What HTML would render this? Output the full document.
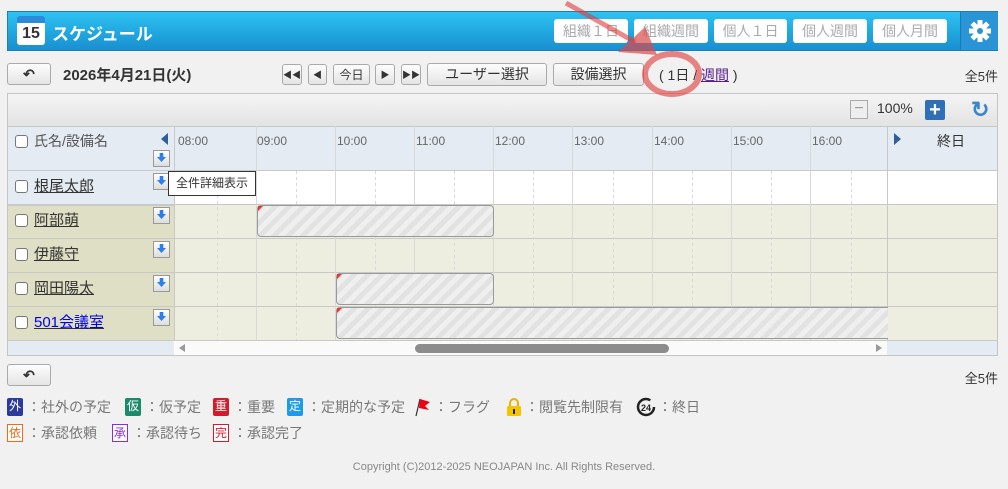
<!DOCTYPE html>
<html><head><meta charset="utf-8"><style>
*{box-sizing:border-box;margin:0;padding:0}
body{width:1008px;height:489px;background:#f1f1f1;font-family:"Liberation Sans","Noto Sans CJK JP",sans-serif;position:relative;overflow:hidden;color:#333}
.a{position:absolute}
.hdr{left:7px;top:11px;width:991px;height:40px;border:1px solid #1d7fb8;background:linear-gradient(#2fc2f2,#1fa4dd 60%,#1b8fd0);}
.hb{top:7px;height:24px;background:#fff;border-radius:3px;color:#aaa;font-size:14px;text-align:center;line-height:24px;width:74px}
.btn{background:linear-gradient(#fdfdfd,#e4e4e4);border:1px solid #aaa;border-radius:3px;text-align:center;font-size:14px;line-height:20px;color:#333}
.row{position:absolute;left:8px;width:989px;height:34px;border-top:1px solid #c8c8c8}
.cb{display:inline-block;width:13px;height:13px;border:1px solid #777;border-radius:3px;background:#fff;vertical-align:-2px;margin-right:6px}
.nm{position:absolute;left:8px;top:7px;font-size:15px;color:#333;text-decoration:underline}
.dl{position:absolute;width:17px;height:17px;border:1px solid #999;background:linear-gradient(#fff,#ddd)}
.dl:after{content:"";position:absolute;left:3px;top:2px;width:9px;height:9px;background:#2a7ff0;clip-path:polygon(30% 0,70% 0,70% 45%,100% 45%,50% 100%,0 45%,30% 45%)}
.ev{position:absolute;border:1px solid #999;border-radius:4px;background:repeating-linear-gradient(135deg,#e2e2e2 0 5px,#efefef 5px 10px)}
.ev:before{content:"";position:absolute;left:0;top:0;width:5px;height:5px;background:#e33;clip-path:polygon(0 0,100% 0,0 100%)}
.lg{font-size:14px;color:#777;position:absolute;white-space:nowrap;display:flex;align-items:center;height:20px}
.lg svg{margin-right:2px}
.ic{display:inline-block;width:16px;height:18px;font-size:12px;line-height:17px;text-align:center;color:#fff;margin-right:4px;border-radius:2px}
</style></head><body>
<div class="a hdr">
 <div class="a" style="left:9px;top:4px;width:28px;height:29px;background:#fff;border-radius:3px;border-top:7px solid #2b8bd8;font-size:16px;font-weight:bold;color:#333;text-align:center;line-height:22px">15</div>
 <div class="a" style="left:44px;top:8px;color:#fff;font-size:17px;font-weight:bold">スケジュール</div>
 <div class="a hb" style="left:546px">組織１日</div>
 <div class="a hb" style="left:626px">組織週間</div>
 <div class="a hb" style="left:706px;width:73px">個人１日</div>
 <div class="a hb" style="left:785px">個人週間</div>
 <div class="a hb" style="left:865px">個人月間</div>
 <div class="a" style="left:952px;top:0;width:38px;height:38px;border-left:1px solid #1b7ab6;background:#2a95d6">
  <svg width="38" height="38" viewBox="0 0 38 38"><g fill="#fff" transform="translate(19 19)"><circle r="7"/><g id="t"><rect x="-2.5" y="-11" width="5" height="6"/></g><use href="#t" transform="rotate(45)"/><use href="#t" transform="rotate(90)"/><use href="#t" transform="rotate(135)"/><use href="#t" transform="rotate(180)"/><use href="#t" transform="rotate(225)"/><use href="#t" transform="rotate(270)"/><use href="#t" transform="rotate(315)"/></g><circle cx="19" cy="19" r="3" fill="#2a95d6"/></svg>
 </div>
</div>
<div class="a btn" style="left:7px;top:63px;width:44px;height:22px;font-weight:bold">↶</div>
<div class="a" style="left:63px;top:64px;font-size:15px;font-weight:bold;color:#333">2026年4月21日(火)</div>
<div class="a btn" style="left:282px;top:64px;width:20px;height:21px;font-size:9px">◀◀</div>
<div class="a btn" style="left:308px;top:64px;width:19px;height:21px;font-size:9px">◀</div>
<div class="a btn" style="left:333px;top:64px;width:37px;height:21px;font-size:12px">今日</div>
<div class="a btn" style="left:375px;top:64px;width:20px;height:21px;font-size:9px">▶</div>
<div class="a btn" style="left:401px;top:64px;width:20px;height:21px;font-size:9px">▶▶</div>
<div class="a btn" style="left:427px;top:63px;width:120px;height:23px">ユーザー選択</div>
<div class="a btn" style="left:553px;top:63px;width:91px;height:23px">設備選択</div>
<div class="a" style="left:659px;top:65px;font-size:14px">( 1日 / <span style="color:#551a8b;text-decoration:underline">週間</span> )</div>
<div class="a" style="right:10px;top:66px;font-size:13px">全5件</div>

<div class="a" style="left:7px;top:93px;width:991px;height:263px;border:1px solid #c4c4c4;background:#fff"></div>
<div class="a" style="left:8px;top:94px;width:989px;height:32px;background:linear-gradient(#f4f4f4,#e3e3e3)"></div>
<div class="a" style="left:850px;top:100px;width:18px;height:19px;border:1px solid #aaa;background:#eee;color:#999;text-align:center;line-height:16px;font-size:16px">−</div>
<div class="a" style="left:877px;top:100px;font-size:14px">100%</div>
<div class="a" style="left:925px;top:100px;width:20px;height:20px;background:#2f6fb5;color:#fff;text-align:center;line-height:20px;font-size:20px;font-weight:bold;border-radius:2px">+</div>
<div class="a" style="left:971px;top:97px;font-size:22px;color:#3a86c8;font-weight:bold">↻</div>

<div class="a" style="left:8px;top:126px;width:989px;height:44px;background:#e4ebf2;border-top:1px solid #c8c8c8"></div>
<div class="a" style="left:15px;top:131px;font-size:14px;color:#555"><span class="cb"></span>氏名/設備名</div>
<div class="a" style="left:161px;top:133px;width:0;height:0;border:6px solid transparent;border-right:7px solid #2f5f96;border-left:0"></div>
<div class="dl" style="left:153px;top:150px"></div>
<div class="a" style="left:894px;top:133px;width:0;height:0;border:6px solid transparent;border-left:7px solid #2f5f96;border-right:0"></div>
<div class="a" style="left:937px;top:131px;font-size:14px">終日</div>

<div class="row" style="top:170px;background:#fff"></div>
<div class="row" style="top:204px;background:#edede0"></div>
<div class="row" style="top:238px;background:#edede0"></div>
<div class="row" style="top:272px;background:#edede0"></div>
<div class="row" style="top:306px;background:#edede0;height:35px;border-bottom:1px solid #c8c8c8"></div>
<div class="a" style="left:8px;top:171px;width:166px;height:33px;background:#e4ebf2"></div>
<div class="a" style="left:8px;top:205px;width:166px;height:135px;background:#dfdfc5"></div>
<div class="a" style="left:8px;top:205px;width:166px;height:1px;background:#c8c8c8"></div>
<div class="a" style="left:8px;top:238px;width:166px;height:1px;background:#c8c8c8"></div>
<div class="a" style="left:8px;top:272px;width:166px;height:1px;background:#c8c8c8"></div>
<div class="a" style="left:8px;top:306px;width:166px;height:1px;background:#c8c8c8"></div>
<div class="a" style="left:8px;top:341px;width:166px;height:14px;background:#e4ebf2"></div>
<div class="a" style="left:887px;top:341px;width:110px;height:14px;background:#e4ebf2"></div>
<div class="a" style="left:174px;top:126px;width:1px;height:214px;background:#c8c8c8"></div>
<div class="a" style="left:887px;top:126px;width:1px;height:214px;background:#c8c8c8"></div>

<svg class="a" style="left:0;top:0" width="1008" height="489">
<g stroke="#d8d8d8" stroke-width="1">
<line x1="256.5" y1="126" x2="256.5" y2="340"/><line x1="335.5" y1="126" x2="335.5" y2="340"/><line x1="414.5" y1="126" x2="414.5" y2="340"/><line x1="493.5" y1="126" x2="493.5" y2="340"/><line x1="572.5" y1="126" x2="572.5" y2="340"/><line x1="652.5" y1="126" x2="652.5" y2="340"/><line x1="731.5" y1="126" x2="731.5" y2="340"/><line x1="810.5" y1="126" x2="810.5" y2="340"/>
</g>
<g stroke="#d8d8d8" stroke-dasharray="3,3">
<line x1="217.5" y1="171" x2="217.5" y2="340"/><line x1="296.5" y1="171" x2="296.5" y2="340"/><line x1="375.5" y1="171" x2="375.5" y2="340"/><line x1="454.5" y1="171" x2="454.5" y2="340"/><line x1="533.5" y1="171" x2="533.5" y2="340"/><line x1="613.5" y1="171" x2="613.5" y2="340"/><line x1="692.5" y1="171" x2="692.5" y2="340"/><line x1="771.5" y1="171" x2="771.5" y2="340"/><line x1="851.5" y1="171" x2="851.5" y2="340"/>
</g>
<g font-size="12" fill="#666" font-family="Liberation Sans,sans-serif"><text x="178" y="145">08:00</text><text x="257" y="145">09:00</text><text x="337" y="145">10:00</text><text x="416" y="145">11:00</text><text x="495" y="145">12:00</text><text x="574" y="145">13:00</text><text x="654" y="145">14:00</text><text x="733" y="145">15:00</text><text x="812" y="145">16:00</text></g>
</svg>

<div class="nm" style="left:15px;top:175px"><span class="cb"></span>根尾太郎</div>
<div class="nm" style="left:15px;top:209px"><span class="cb"></span>阿部萌</div>
<div class="nm" style="left:15px;top:243px"><span class="cb"></span>伊藤守</div>
<div class="nm" style="left:15px;top:277px"><span class="cb"></span>岡田陽太</div>
<div class="nm" style="left:15px;top:311px"><span class="cb"></span><span style="color:#00e">501会議室</span></div>
<div class="dl" style="left:153px;top:173px"></div>
<div class="dl" style="left:153px;top:207px"></div>
<div class="dl" style="left:153px;top:241px"></div>
<div class="dl" style="left:153px;top:275px"></div>
<div class="dl" style="left:153px;top:309px"></div>

<div class="ev" style="left:257px;top:205px;width:237px;height:32px"></div>
<div class="ev" style="left:336px;top:273px;width:158px;height:32px"></div>
<div class="ev" style="left:336px;top:307px;width:552px;height:32px;border-right:none;border-radius:4px 0 0 4px"></div>
<div class="a" style="left:168px;top:171px;width:88px;height:25px;background:#fff;border:1px solid #333;font-size:12px;line-height:23px;text-align:center">全件詳細表示</div>

<div class="a" style="left:175px;top:341px;width:712px;height:14px;background:#fafafa"></div>
<div class="a" style="left:179px;top:344px;width:0;height:0;border:4px solid transparent;border-right:6px solid #999;border-left:0"></div>
<div class="a" style="left:876px;top:344px;width:0;height:0;border:4px solid transparent;border-left:6px solid #999;border-right:0"></div>
<div class="a" style="left:415px;top:344px;width:254px;height:9px;background:#8c8c8c;border-radius:5px"></div>

<div class="a btn" style="left:7px;top:364px;width:44px;height:22px;font-weight:bold">↶</div>
<div class="a" style="right:10px;top:368px;font-size:13px">全5件</div>

<div class="lg" style="left:7px;top:397px"><span class="ic" style="background:#2b3a9e">外</span>：社外の予定</div>
<div class="lg" style="left:125px;top:397px"><span class="ic" style="background:#1a8a6a">仮</span>：仮予定</div>
<div class="lg" style="left:213px;top:397px"><span class="ic" style="background:#d21c2c">重</span>：重要</div>
<div class="lg" style="left:287px;top:397px"><span class="ic" style="background:#1e9be6">定</span>：定期的な予定</div>
<div class="lg" style="left:412px;top:397px"><svg width="20" height="20"><line x1="4" y1="19" x2="8" y2="2" stroke="#333" stroke-width="1.2"/><polygon points="8,2 18,5 13,9 17,13 7,11" fill="#e01"/></svg>：フラグ</div>
<div class="lg" style="left:505px;top:397px"><svg width="18" height="20"><path d="M5 9V6a4 4 0 0 1 8 0v3" stroke="#e6b400" stroke-width="2" fill="none"/><rect x="2" y="9" width="14" height="10" rx="1" fill="#f5c400"/><rect x="8" y="12" width="2" height="5" fill="#222"/></svg>：閲覧先制限有</div>
<div class="lg" style="left:636px;top:397px"><svg width="20" height="20"><circle cx="10" cy="10" r="8" fill="none" stroke="#222" stroke-width="2.5" stroke-dasharray="42 8"/><text x="10" y="14" font-size="9" font-weight="bold" text-anchor="middle" fill="#222" font-family="Liberation Sans">24</text></svg>：終日</div>

<div class="lg" style="left:7px;top:423px"><span class="ic" style="border:1px solid #f06a1a;color:#f06a1a;background:#fff;border-radius:0">依</span>：承認依頼</div>
<div class="lg" style="left:112px;top:423px"><span class="ic" style="border:1px solid #8a2be2;color:#8a2be2;background:#fff;border-radius:0">承</span>：承認待ち</div>
<div class="lg" style="left:213px;top:423px"><span class="ic" style="border:1px solid #d21c2c;color:#d21c2c;background:#fff;border-radius:0">完</span>：承認完了</div>
<div class="a" style="left:0;width:1008px;top:461px;text-align:center;font-size:11px;color:#888">Copyright (C)2012-2025 NEOJAPAN Inc. All Rights Reserved.</div>

<svg class="a" style="left:0;top:0" width="1008" height="489">
<g opacity="0.6" fill="none" stroke="#e23a3a">
<line x1="566" y1="3" x2="635" y2="42" stroke-width="5"/>
<ellipse cx="672" cy="74" rx="27" ry="20" stroke-width="6"/>
</g>
<polygon points="618,52 657,55 645,27" fill="#d84a4a" opacity="0.7"/>
</svg>
</body></html>
